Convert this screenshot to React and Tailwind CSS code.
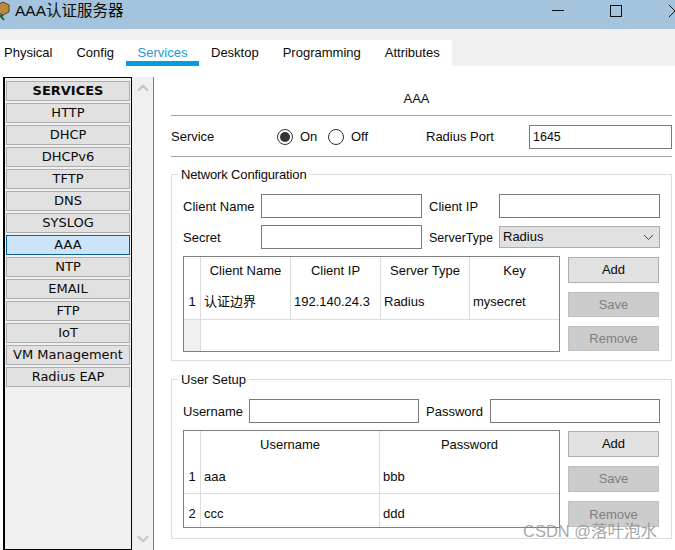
import React from 'react';
import { ChevronUp, ChevronDown } from 'lucide-react';

const sans = "font-['Liberation_Sans','Noto_Sans_CJK_SC',sans-serif]";

const services = ['HTTP', 'DHCP', 'DHCPv6', 'TFTP', 'DNS', 'SYSLOG', 'AAA', 'NTP', 'EMAIL', 'FTP', 'IoT', 'VM Management', 'Radius EAP'];
const tabs = [
  { label: 'Physical', className: 'mr-6' },
  { label: 'Config', className: 'mr-3' },
  { label: 'Services', className: 'mr-3 w-[73px] border-b-[5px] border-[#009fdb] text-center text-[#1a9ad6]' },
  { label: 'Desktop', className: 'mr-6' },
  { label: 'Programming', className: 'mr-6' },
  { label: 'Attributes', className: '' }
];

const TextBox = ({ className = '', value = '' }) => (
  <div className={`h-6 border border-[#7a7a7a] bg-white px-[3px] text-[12.5px] leading-[22px] ${className}`}>{value}</div>
);

const SideButton = ({ label, active, bold }) => (
  <div
    className={`h-5 shrink-0 border text-center text-[13px] leading-[18px] ${
      active ? 'border-[#0f5c9e] bg-[#cce4f7]' : 'border-[#adadad] bg-[#e1e1e1]'
    } ${bold ? 'font-bold' : ''}`}
  >
    {label}
  </div>
);

const ActionButtons = ({ lowerHeight }) => (
  <div className="flex w-[91px] flex-col gap-[9px] pt-px">
    <div className="flex h-[26px] items-center justify-center border border-[#adadad] bg-[#e1e1e1]">Add</div>
    <div className={`flex ${lowerHeight} items-center justify-center border border-[#bfbfbf] bg-[#cccccc] text-[#7f7f7f]`}>Save</div>
    <div className={`flex ${lowerHeight} items-center justify-center border border-[#bfbfbf] bg-[#cccccc] pt-px text-[#7f7f7f]`}>Remove</div>
  </div>
);

const Radio = ({ checked }) => (
  <span className="flex h-4 w-4 items-center justify-center rounded-full border border-[#333333] bg-white">
    {checked && <span className="h-[10px] w-[10px] rounded-full bg-[#333333]" />}
  </span>
);

const Cell = ({ className = '', children }) => (
  <div className={`flex items-center overflow-hidden border-r border-[#dcdcdc] text-[13px] ${className}`}>{children}</div>
);

const ClientTable = () => (
  <div className="flex h-[96px] w-[377px] flex-col border border-[#808080] bg-white">
    <div className="flex h-[26px] pt-0">
      <Cell className="w-[17px]" />
      <Cell className="w-[90px] justify-center pt-[2px]">Client Name</Cell>
      <Cell className="w-[90px] justify-center pt-[2px]">Client IP</Cell>
      <Cell className="w-[89px] justify-center pt-[2px]">Server Type</Cell>
      <Cell className="flex-1 justify-center border-r-0 pt-[2px]">Key</Cell>
    </div>
    <div className="flex h-[37px] border-b border-[#dcdcdc]">
      <Cell className="w-[17px] justify-center pt-[2px]">1</Cell>
      <Cell className="w-[90px] pl-[3px] pt-[2px]">认证边界</Cell>
      <Cell className="w-[90px] pl-[3px] pt-[2px]">192.140.24.3</Cell>
      <Cell className="w-[89px] pl-[3px] pt-[2px]">Radius</Cell>
      <Cell className="flex-1 border-r-0 pl-[3px] pt-[2px]">mysecret</Cell>
    </div>
    <div className="flex flex-1">
      <div className="w-[17px] border-r border-[#dcdcdc] bg-[#f0f0f0]" />
    </div>
  </div>
);

const UserTable = () => (
  <div className="flex h-[98px] w-[377px] flex-col border border-[#808080] bg-white">
    <div className="flex h-[26px]">
      <Cell className="w-[17px]" />
      <Cell className="w-[179px] justify-center pt-[2px]">Username</Cell>
      <Cell className="flex-1 justify-center border-r-0 pt-[2px]">Password</Cell>
    </div>
    <div className="flex h-[37px] border-b border-[#dcdcdc]">
      <Cell className="w-[17px] justify-center pt-[3px]">1</Cell>
      <Cell className="w-[179px] pl-[3px] pt-[3px]">aaa</Cell>
      <Cell className="flex-1 border-r-0 pl-[3px] pt-[3px]">bbb</Cell>
    </div>
    <div className="flex flex-1">
      <Cell className="w-[17px] justify-center pt-[6px]">2</Cell>
      <Cell className="w-[179px] pl-[3px] pt-[6px]">ccc</Cell>
      <Cell className="flex-1 border-r-0 pl-[3px] pt-[6px]">ddd</Cell>
    </div>
  </div>
);

const App = () => {
  return (
    <div className={`relative h-[550px] w-[675px] overflow-hidden bg-white text-[#0a0a0a] ${sans}`}>
      {/* Title bar */}
      <div className="flex h-[29px] items-center bg-[#a3c4dc] pb-2">
        <svg width="15" height="20" viewBox="0 0 15 20" className="shrink-0">
          <path d="M-3 4l6-3 6 3v7l-6 3-6-3z" fill="#b98a3e" stroke="#5a4316" strokeWidth="1" />
          <path d="M0 14l4 5M3 14l-3 2" stroke="#1e5c2e" strokeWidth="2" fill="none" />
        </svg>
        <span className="text-[15.5px]">AAA认证服务器</span>
        <div className="ml-auto flex items-center">
          <div className="h-px w-3 bg-[#111111]" />
          <div className="ml-[46px] h-3 w-3 border border-[#111111]" />
          <svg width="6" height="12" viewBox="0 0 6 12" className="ml-[47px]">
            <path d="M0 0l6 6M0 12l6-6" stroke="#111111" fill="none" />
          </svg>
        </div>
      </div>

      {/* Tabs */}
      <div className="h-[37px] bg-[#f0f0f0] pt-[11px]">
        <div className="flex h-[26px] w-[452px] bg-white pl-1 text-[13px]">
          {tabs.map((tab) => (
            <div key={tab.label} className={`h-[26px] pt-[3px] ${tab.className}`}>
              {tab.label}
            </div>
          ))}
        </div>
      </div>

      <div className="flex pt-[11px]">
        {/* Services sidebar */}
        <div className="ml-[3px] flex h-[473px] w-[151px] border-r border-[#808080] bg-[#f0f0f0]">
          <div className="flex w-[129px] flex-col gap-[2px] border-x border-y border-black border-l-2 px-px pt-[3px] font-['DejaVu_Sans',sans-serif]">
            <SideButton label="SERVICES" bold />
            {services.map((service) => (
              <SideButton key={service} label={service} active={service === 'AAA'} />
            ))}
          </div>
          <div className="flex flex-1 flex-col items-center justify-between py-[2px] text-[#c8c8c8]">
            <ChevronUp size={18} strokeWidth={3} />
            <ChevronDown size={18} strokeWidth={3} />
          </div>
        </div>

        {/* AAA panel */}
        <div className="ml-[17px] w-[501px] text-[13px]">
          <div className="h-[39px] border-b border-[#a0a0a0] pr-[10px] pt-[14px] text-center leading-[15px]">AAA</div>
          <div className="flex h-[41px] items-center border-b border-[#a0a0a0] pt-[2px]">
            <span className="w-[106px]">Service</span>
            <Radio checked />
            <span className="ml-[7px] w-[28px]">On</span>
            <Radio />
            <span className="ml-[7px] w-[75px]">Off</span>
            <span className="w-[103px]">Radius Port</span>
            <TextBox className="-mt-px w-[143px]" value="1645" />
          </div>

          <fieldset className="mt-[10px] h-[194px] border border-[#dcdcdc] px-[11px]">
            <legend className="-ml-[5px] px-[3px] leading-[15px] tracking-[-0.15px]">Network Configuration</legend>
            <div className="mt-3 flex h-6 items-center">
              <span className="w-[78px] pt-[2px]">Client Name</span>
              <TextBox className="w-[161px]" />
              <span className="ml-[7px] w-[70px] pt-[2px]">Client IP</span>
              <TextBox className="w-[161px]" />
            </div>
            <div className="mt-[7px] flex h-6 items-center">
              <span className="w-[78px] pt-[2px]">Secret</span>
              <TextBox className="w-[161px]" />
              <span className="ml-[7px] w-[70px] pt-[2px] text-[12.5px]">ServerType</span>
              <div className="flex h-[22px] w-[161px] items-center justify-between border border-[#adadad] bg-[#e1e1e1] pl-[3px] pr-[6px]">
                Radius
                <svg width="9" height="5" viewBox="0 0 9 5">
                  <path d="M0 0l4.5 4.5L9 0" stroke="#444444" fill="none" />
                </svg>
              </div>
            </div>
            <div className="mt-[7px] flex gap-2">
              <ClientTable />
              <ActionButtons lowerHeight="h-[25px]" />
            </div>
          </fieldset>

          <fieldset className="mt-[11px] h-[167px] border border-[#dcdcdc] px-[11px]">
            <legend className="-ml-[5px] px-[3px] leading-[15px]">User Setup</legend>
            <div className="mt-3 flex h-6 items-center">
              <span className="w-[66px] pt-[2px]">Username</span>
              <TextBox className="w-[170px]" />
              <span className="ml-[7px] w-[64px] pt-[2px]">Password</span>
              <TextBox className="w-[170px]" />
            </div>
            <div className="mt-[7px] flex gap-2">
              <UserTable />
              <ActionButtons lowerHeight="h-[26px]" />
            </div>
          </fieldset>
        </div>
      </div>

      <div className="absolute left-[523px] top-[521px] text-[16.5px] leading-5 text-[#8f8f8f]/80">CSDN @落叶泡水</div>
    </div>
  );
};

export default App;
